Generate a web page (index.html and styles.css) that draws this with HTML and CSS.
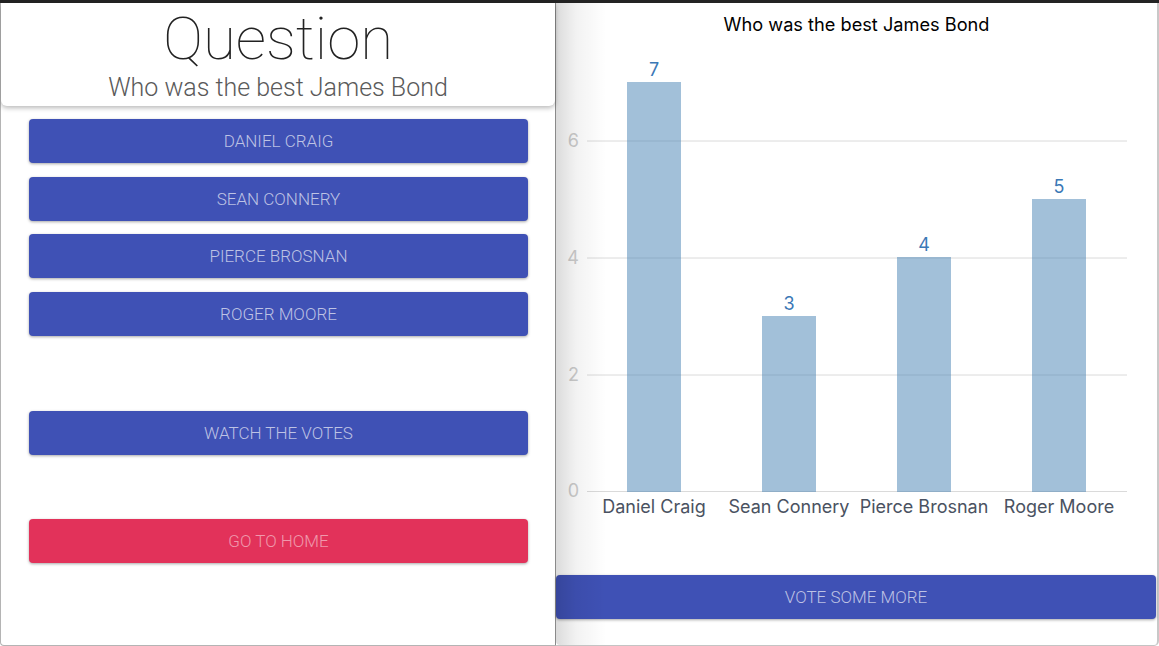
FILE: index.html
```html
<!DOCTYPE html>
<html>
<head>
<meta charset="utf-8">
<link rel="stylesheet" href="styles.css">
</head>
<body>
<div class="app">
  <section class="left">
    <header class="qcard">
      <h1 class="qtitle">Question</h1>
      <p class="qsub">Who was the best James Bond</p>
    </header>
    <div class="actions">
      <div class="choices">
        <button class="btn">Daniel Craig</button>
        <button class="btn">Sean Connery</button>
        <button class="btn">Pierce Brosnan</button>
        <button class="btn">Roger Moore</button>
      </div>
      <button class="btn watch">Watch the votes</button>
      <button class="btn btn-red home">Go to home</button>
    </div>
  </section>
  <section class="right">
    <div class="chart-title">Who was the best James Bond</div>
    <svg class="chart" width="601" height="532" viewBox="0 0 601 532">
      <g class="grid">
        <line x1="31" y1="98" x2="571" y2="98"/>
        <line x1="31" y1="215" x2="571" y2="215"/>
        <line x1="31" y1="332" x2="571" y2="332"/>
        <line x1="31" y1="448.5" x2="571" y2="448.5"/>
      </g>
      <g class="ylab">
        <text x="23" y="104">6</text>
        <text x="23" y="221">4</text>
        <text x="23" y="338">2</text>
        <text x="23" y="454">0</text>
      </g>
      <g class="bars">
        <rect x="71" y="39" width="54" height="410"/>
        <rect x="206" y="273" width="54" height="176"/>
        <rect x="341" y="214" width="54" height="235"/>
        <rect x="476" y="156" width="54" height="293"/>
      </g>
      <g class="vals">
        <text x="98" y="33">7</text>
        <text x="233" y="267">3</text>
        <text x="368" y="208">4</text>
        <text x="503" y="150">5</text>
      </g>
      <g class="cats">
        <text x="98" y="470">Daniel Craig</text>
        <text x="233" y="470">Sean Connery</text>
        <text x="368" y="470">Pierce Brosnan</text>
        <text x="503" y="470">Roger Moore</text>
      </g>
    </svg>
    <button class="btn more">Vote some more</button>
  </section>
</div>
</body>
</html>
```

FILE: styles.css
```css
* { box-sizing: border-box; }
html, body { margin: 0; padding: 0; }
body {
  width: 1159px;
  height: 646px;
  overflow: hidden;
  background: #fff;
  font-family: Roboto, "Noto Sans", sans-serif;
}
.app {
  display: flex;
  height: 646px;
  border-top: 3px solid #232323;
}
.left {
  width: 556px;
  flex: none;
  border-left: 1px solid #b4b4b4;
  border-right: 1px solid #8a8a8a;
  border-bottom: 1px solid #b4b4b4;
  border-bottom-left-radius: 4px;
  background: #fff;
  display: flex;
  flex-direction: column;
}
.qcard {
  height: 103px;
  background: #fff;
  border-radius: 0 0 6px 6px;
  box-shadow: 0 2px 5px rgba(0,0,0,0.28);
  text-align: center;
  position: relative;
  z-index: 1;
}
.qtitle {
  margin: 0;
  padding-top: 3px;
  font-weight: 100;
  font-size: 60px;
  line-height: 66px;
  color: #222;
}
.qsub {
  margin: 0;
  font-weight: 300;
  font-size: 25px;
  line-height: 31px;
  color: #5a5a5a;
}
.actions {
  padding: 13px 27px 0 28px;
  display: flex;
  flex-direction: column;
}
.choices {
  display: flex;
  flex-direction: column;
  gap: 13.5px;
}
.btn {
  display: block;
  width: 100%;
  height: 44px;
  border: 0;
  border-radius: 4px;
  background: #3f51b5;
  color: rgba(255,255,255,0.66);
  font-family: Roboto, "Noto Sans", sans-serif;
  font-weight: 300;
  font-size: 17px;
  text-transform: uppercase;
  box-shadow: 0 1px 3px rgba(0,0,0,0.35);
  padding: 0;
}
.btn-red { background: #e2325a; color: rgba(255,255,255,0.5); }
.watch { margin-top: 75px; }
.home { margin-top: 64px; }

.right {
  flex: 1;
  position: relative;
  border-right: 2px solid #c8c8c8;
  border-bottom: 1px solid #c4c4c4;
  border-bottom-right-radius: 5px;
  display: flex;
  flex-direction: column;
  background: #fff;
}
.right::before {
  content: "";
  position: absolute;
  left: 0; top: 0; bottom: 0;
  width: 50px;
  background: linear-gradient(to right, rgba(0,0,0,0.14), rgba(0,0,0,0.05) 40%, rgba(0,0,0,0));
  border-bottom-left-radius: 4px;
  pointer-events: none;
  z-index: 2;
}
.chart-title {
  height: 40px;
  padding-top: 10px;
  text-align: center;
  font-family: Inter, "Liberation Sans", sans-serif;
  font-size: 18.2px;
  line-height: 22px;
  color: #000;
}
.chart { display: block; }
.grid line { stroke: #dadada; stroke-width: 1; }
.ylab text {
  font-family: Inter, "Liberation Sans", sans-serif;
  font-size: 18px;
  fill: #cdcdcd;
  text-anchor: end;
}
.bars rect { fill: rgba(70,130,180,0.5); }
.vals text {
  font-family: Inter, "Liberation Sans", sans-serif;
  font-size: 18px;
  fill: #3b78b6;
  text-anchor: middle;
}
.cats text {
  font-family: Inter, "Liberation Sans", sans-serif;
  font-size: 18px;
  fill: #4a5261;
  text-anchor: middle;
}
.more {
  width: 600px;
  margin-top: 0;
}
```
